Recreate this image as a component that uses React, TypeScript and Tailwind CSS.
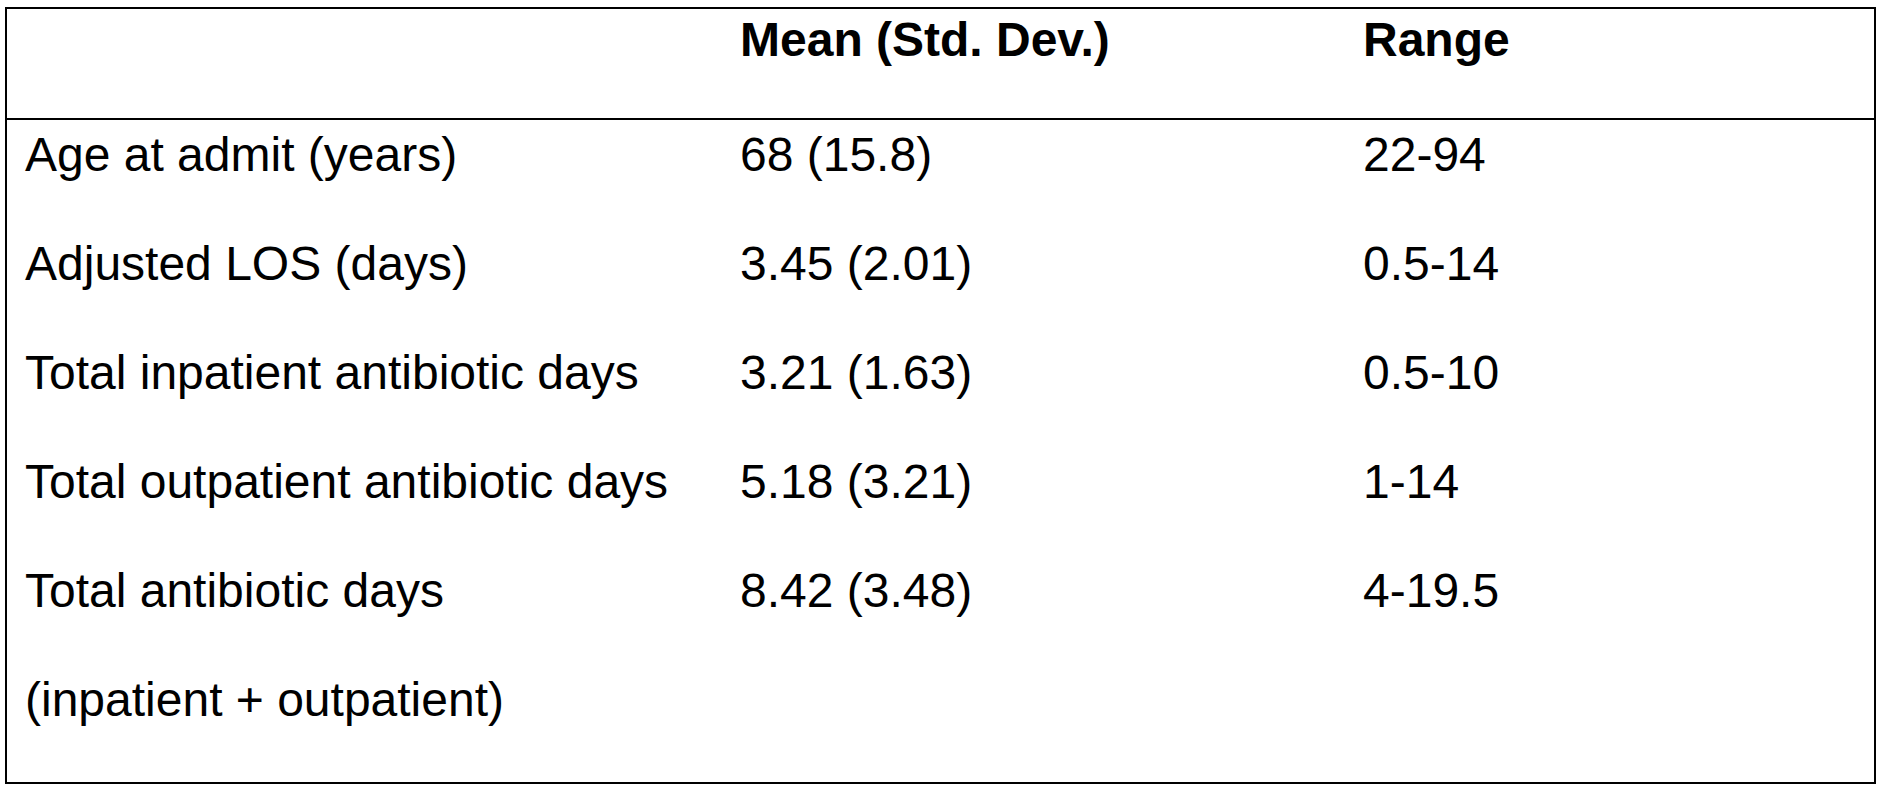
import * as React from "react";

const rows = [
  { label: ["Age at admit (years)"], mean: "68 (15.8)", range: "22-94" },
  { label: ["Adjusted LOS (days)"], mean: "3.45 (2.01)", range: "0.5-14" },
  { label: ["Total inpatient antibiotic days"], mean: "3.21 (1.63)", range: "0.5-10" },
  { label: ["Total outpatient antibiotic days"], mean: "5.18 (3.21)", range: "1-14" },
  { label: ["Total antibiotic days", "(inpatient + outpatient)"], mean: "8.42 (3.48)", range: "4-19.5" },
];

export default function App() {
  return (
    <div className="w-[1880px] h-[790px] bg-white pt-[7px] pl-[5px] text-black font-['Liberation_Sans',Arial,sans-serif]">
      <div className="w-[1871px] h-[777px] border-2 border-black">
        <div className="grid grid-cols-[715px_623px_1fr] h-[111px] border-b-2 border-black text-[48px] font-bold leading-[56px] pt-[3px]">
          <div className="pl-[18px]"></div>
          <div className="pl-[18px]">Mean (Std. Dev.)</div>
          <div className="pl-[18px]">Range</div>
        </div>
        <div className="pt-[7px] text-[48px] leading-[56px]">
          {rows.map((r) => (
            <div key={r.mean} className="grid grid-cols-[715px_623px_1fr]">
              <div className="pl-[18px]">
                {r.label.map((l) => (
                  <div key={l} className="h-[109px]">{l}</div>
                ))}
              </div>
              <div className="pl-[18px]">{r.mean}</div>
              <div className="pl-[18px]">{r.range}</div>
            </div>
          ))}
        </div>
      </div>
    </div>
  );
}
